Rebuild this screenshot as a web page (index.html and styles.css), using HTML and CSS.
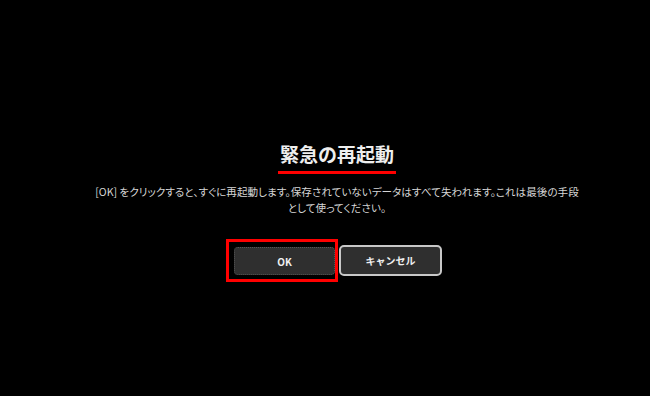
FILE: index.html
```html
<!DOCTYPE html>
<html lang="ja">
<head>
<meta charset="utf-8">
<title>緊急の再起動</title>
<link rel="stylesheet" href="styles.css">
</head>
<body>
<main class="screen">
  <h1 class="title">緊急の再起動</h1>
  <p class="message">[OK] をクリックすると、すぐに再起動します。保存されていないデータはすべて失われます。これは最後の手段<br>として使ってください。</p>
  <div class="actions">
    <div class="highlight">
      <button class="btn btn-ok">OK</button>
    </div>
    <button class="btn btn-cancel">キャンセル</button>
  </div>
</main>
</body>
</html>
```
FILE: styles.css
```css
html, body {
  margin: 0;
  padding: 0;
  background: #000;
}
body {
  width: 650px;
  height: 396px;
  overflow: hidden;
  font-family: "Noto Sans CJK JP", "Noto Sans", sans-serif;
}
.screen {
  display: flex;
  flex-direction: column;
  align-items: center;
  padding: 142px 0 0 24px;
}
.title {
  margin: 0;
  padding: 0 2px 5px;
  font-size: 19px;
  line-height: 24px;
  font-weight: 700;
  color: #eeeeee;
  border-bottom: 3px solid #ff0000;
}
.message {
  margin: 10px 0 0;
  font-size: 10.6px;
  line-height: 16px;
  color: #d6d6d6;
  text-align: center;
  font-feature-settings: "palt";
}
.actions {
  display: flex;
  align-items: center;
  gap: 1px;
  margin: 23px 6px 0 0;
}
.highlight {
  display: flex;
  border: 3px solid #ff0000;
  padding: 5px 0 4px 5px;
}
.btn {
  font-family: "Noto Sans CJK JP", "Noto Sans", sans-serif;
  font-weight: 700;
  font-size: 10px;
  color: #f0f0f0;
  background: #2f2f2f;
  display: flex;
  align-items: center;
  justify-content: center;
  padding: 0;
  margin: 0;
}
.btn-ok {
  width: 101px;
  height: 28px;
  border: 1px dotted #555;
  border-radius: 4px;
}
.btn-cancel {
  width: 103px;
  height: 31px;
  border: 2px solid #c8c8c8;
  border-radius: 5px;
}
```
